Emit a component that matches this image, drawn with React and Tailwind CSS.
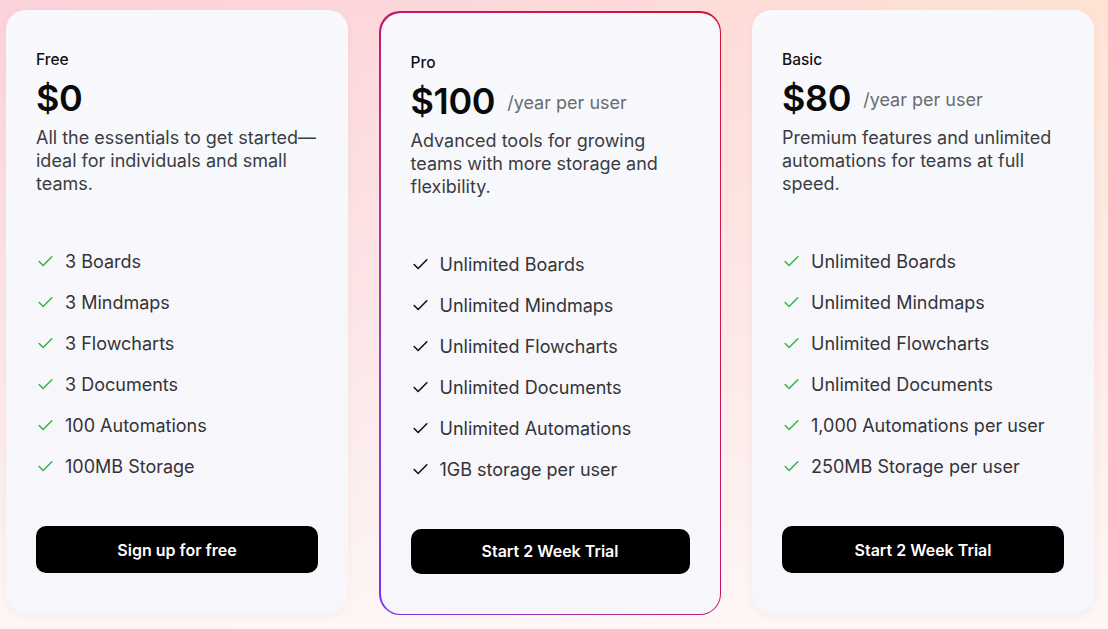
import { Check } from 'lucide-react'

// Three pricing tiers side by side; the middle one gets the gradient ring.
const plans = [
  {
    name: 'Free',
    price: '$0',
    unit: null,
    blurb: 'All the essentials to get started—ideal for individuals and small teams.',
    features: ['3 Boards', '3 Mindmaps', '3 Flowcharts', '3 Documents', '100 Automations', '100MB Storage'],
    cta: 'Sign up for free',
  },
  {
    name: 'Pro',
    price: '$100',
    unit: '/year per user',
    blurb: 'Advanced tools for growing teams with more storage and flexibility.',
    features: [
      'Unlimited Boards',
      'Unlimited Mindmaps',
      'Unlimited Flowcharts',
      'Unlimited Documents',
      'Unlimited Automations',
      '1GB storage per user',
    ],
    cta: 'Start 2 Week Trial',
    featured: true,
  },
  {
    name: 'Basic',
    price: '$80',
    unit: '/year per user',
    blurb: 'Premium features and unlimited automations for teams at full speed.',
    features: [
      'Unlimited Boards',
      'Unlimited Mindmaps',
      'Unlimited Flowcharts',
      'Unlimited Documents',
      '1,000 Automations per user',
      '250MB Storage per user',
    ],
    cta: 'Start 2 Week Trial',
  },
]

function PlanBody({ plan }) {
  return (
    <div className="h-full rounded-[20px] bg-gradient-to-b from-[#f8f9fd] to-[#f7f6fa] px-[30px] pt-[40px] pb-[40px] flex flex-col">
      <div className="text-[15.5px] leading-[20px] font-medium text-[#111]">{plan.name}</div>
      <div className="mt-[8px] flex items-center gap-[12px]">
        <span className="text-[36px] leading-[40px] font-semibold tracking-[-0.01em] text-[#0a0a0a]">{plan.price}</span>
        {plan.unit ? <span className="mt-[3px] text-[18px] text-[#6b6b70]">{plan.unit}</span> : null}
      </div>
      <p className="mt-[8px] min-h-[69px] text-[18px] leading-[23px] text-[#3c3c41]">{plan.blurb}</p>
      <ul className="mt-[55px] flex flex-col gap-[18px]">
        {plan.features.map((f) => (
          <li key={f} className="flex items-center gap-[10px] text-[18px] leading-[23px] text-[#333338]">
            <Check
              size={19}
              strokeWidth={2}
              className={plan.featured ? 'text-[#111] shrink-0' : 'text-[#3bb54a] shrink-0'}
            />
            {f}
          </li>
        ))}
      </ul>
      <button
        type="button"
        className="mt-[48px] h-[47px] w-full rounded-[10px] bg-black text-white text-[16px] font-semibold"
      >
        {plan.cta}
      </button>
    </div>
  )
}

export default function App() {
  return (
    <div className="h-[629px] w-full bg-gradient-to-r from-[#fcd2db] via-[#fdd9da] to-[#fde4d4] font-['Inter',sans-serif] overflow-hidden">
      <div className="h-full bg-gradient-to-b from-transparent via-[#fdf0f0]/60 to-[#fdf7f6] pl-[6px] pt-[10px] flex items-start gap-[31px]">
        {plans.map((plan) =>
          plan.featured ? (
            <div
              key={plan.name}
              className="mt-[1px] w-[342px] h-[604px] rounded-[21px] p-[1.5px] bg-gradient-to-tr from-[#7b2ff0] via-[#c5146a] to-[#d40f2f]"
            >
              <PlanBody plan={plan} />
            </div>
          ) : (
            <div key={plan.name} className="w-[342px] h-[603px] rounded-[20px] shadow-[0_2px_8px_rgba(200,170,180,0.15)]">
              <PlanBody plan={plan} />
            </div>
          )
        )}
      </div>
    </div>
  )
}
